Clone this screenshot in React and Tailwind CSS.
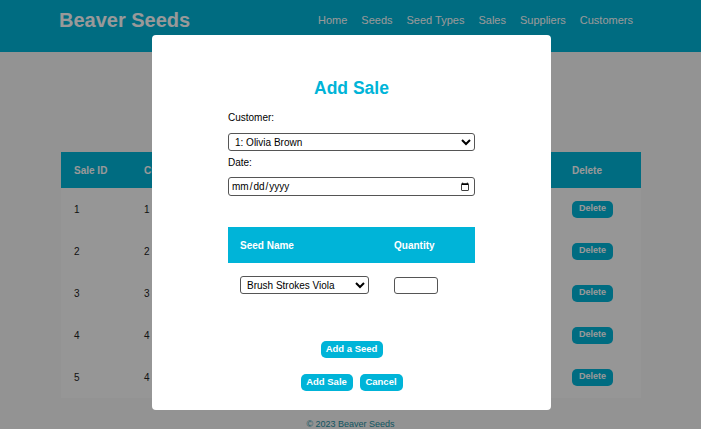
import { useState } from 'react';

const sales = [
    { id: 1, customer: 1, date: '2023-01-12', total: '24.50' },
    { id: 2, customer: 2, date: '2023-02-03', total: '12.00' },
    { id: 3, customer: 3, date: '2023-02-19', total: '31.75' },
    { id: 4, customer: 4, date: '2023-03-08', total: '9.25' },
    { id: 5, customer: 4, date: '2023-03-22', total: '18.00' },
];

const links = ['Home', 'Seeds', 'Seed Types', 'Sales', 'Suppliers', 'Customers'];

function AddSaleModal() {
    const [customer, setCustomer] = useState('1');
    const [seed, setSeed] = useState('1');

    return (
        <div className="fixed inset-0 bg-black/40 flex justify-center pt-[35px] pl-[2px]">
            <div className="w-[399px] h-[375px] bg-white rounded-[4px] flex flex-col items-center pt-[43px]">
                <h2 className="text-[17.5px] leading-[20px] font-bold text-[#00b4d8]">Add Sale</h2>
                <div className="w-[247px] mt-[13px] text-[10px] text-black">
                    <label className="block leading-[14px]">Customer:</label>
                    <select
                        className="mt-[8px] w-full h-[18px] text-[10px] border border-[#555] rounded-[3px] bg-white px-[2px]"
                        value={customer}
                        onChange={(e) => setCustomer(e.target.value)}
                    >
                        <option value="1">1: Olivia Brown</option>
                        <option value="2">2: Liam Smith</option>
                    </select>
                    <label className="block leading-[14px] mt-[5px]">Date:</label>
                    <input
                        type="date"
                        className="mt-[7px] w-full h-[19px] text-[10px] border border-[#555] rounded-[3px] px-[2px]"
                    />
                    <table className="w-full mt-[31px] border-collapse">
                        <thead>
                            <tr className="bg-[#00b4d8] h-[36px] text-white text-[10px] font-bold text-left">
                                <th className="pl-[12px] w-[166px]">Seed Name</th>
                                <th>Quantity</th>
                            </tr>
                        </thead>
                        <tbody>
                            <tr className="h-[44px]">
                                <td className="pl-[12px]">
                                    <select
                                        className="w-[129px] h-[18px] text-[10px] border border-[#555] rounded-[3px] bg-white px-[2px]"
                                        value={seed}
                                        onChange={(e) => setSeed(e.target.value)}
                                    >
                                        <option value="1">Brush Strokes Viola</option>
                                        <option value="2">Sweet Basil</option>
                                    </select>
                                </td>
                                <td>
                                    <input type="number" className="w-[44px] h-[17px] border border-[#555] rounded-[3px] text-[10px]" />
                                </td>
                            </tr>
                        </tbody>
                    </table>
                </div>
                <button className="mt-[34px] h-[17px] w-[62px] rounded-[5px] bg-[#00b4d8] text-white text-[9.5px] font-bold">Add a Seed</button>
                <div className="mt-[16px] flex gap-[7px]">
                    <button className="h-[17px] w-[52px] rounded-[5px] bg-[#00b4d8] text-white text-[9.5px] font-bold">Add Sale</button>
                    <button className="h-[17px] w-[43px] rounded-[5px] bg-[#00b4d8] text-white text-[9.5px] font-bold">Cancel</button>
                </div>
            </div>
        </div>
    );
}

export default function App() {
    return (
        <div className="min-h-[429px] bg-[#f5f5f5] font-['Liberation_Sans',Arial,sans-serif] relative">
            <header className="h-[52px] bg-[#00b4d8] flex items-center justify-between pl-[59px] pr-[68px] pb-[12px]">
                <h1 className="text-[20px] leading-[23px] font-bold text-white">Beaver Seeds</h1>
                <nav className="flex gap-[14px] text-[11px] text-white">
                    {links.map((l) => (
                        <a key={l} href="#">{l}</a>
                    ))}
                </nav>
            </header>
            <main className="pt-[100px] px-[61px]">
                <table className="w-[580px] border-collapse bg-[#fbfbfb] text-[10px] text-left">
                    <thead>
                        <tr className="bg-[#00b4d8] h-[36px] text-white font-bold">
                            <th className="pl-[13px] w-[70px]">Sale ID</th>
                            <th className="pl-[13px] w-[110px]">Customer ID</th>
                            <th className="pl-[13px] w-[130px]">Date</th>
                            <th className="pl-[13px] w-[100px]">Total</th>
                            <th className="pl-[13px] w-[88px]">Edit</th>
                            <th className="pl-[13px]">Delete</th>
                        </tr>
                    </thead>
                    <tbody>
                        {sales.map((s) => (
                            <tr key={s.id} className="h-[42px] text-[#222]">
                                <td className="pl-[13px]">{s.id}</td>
                                <td className="pl-[13px]">{s.customer}</td>
                                <td className="pl-[13px]">{s.date}</td>
                                <td className="pl-[13px]">{s.total}</td>
                                <td className="pl-[13px]"></td>
                                <td className="pl-[13px]">
                                    <button className="h-[17px] px-[7px] rounded-[5px] bg-[#00b4d8] text-white text-[9px] font-bold">Delete</button>
                                </td>
                            </tr>
                        ))}
                    </tbody>
                </table>
            </main>
            <footer className="text-center text-[9px] leading-[10px] text-[#1b8fa3] mt-[21px]">© 2023 Beaver Seeds</footer>
            <AddSaleModal />
        </div>
    );
}
